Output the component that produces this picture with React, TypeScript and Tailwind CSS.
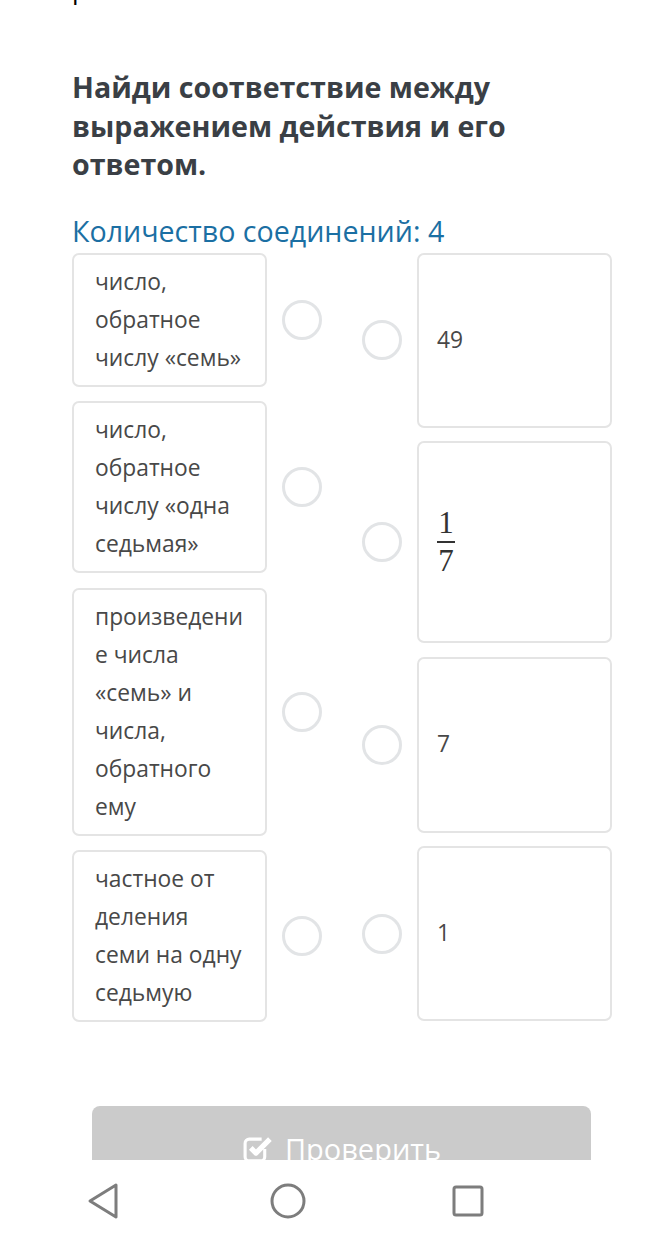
import React from "react";

const leftItems = [
  ["число,", "обратное", "числу «семь»"],
  ["число,", "обратное", "числу «одна", "седьмая»"],
  ["произведени", "е числа", "«семь» и", "числа,", "обратного", "ему"],
  ["частное от", "деления", "семи на одну", "седьмую"],
];

const rightHeights = ["h-[175px]", "h-[202px]", "h-[176px]", "h-[175px]"];

function Dot() {
  return <div className="h-[40px] w-[40px] shrink-0 rounded-full border-[3px] border-[#e2e4e6] bg-white" />;
}

function Fraction() {
  return (
    <div className="flex flex-col items-center font-['Liberation_Serif','DejaVu_Serif',serif] text-[31px] leading-[30px] text-[#333]">
      <span>1</span>
      <span className="my-[3px] h-[2px] w-[18px] bg-[#333]" />
      <span>7</span>
    </div>
  );
}

export default function App() {
  const rightContent: React.ReactNode[] = [
    <span>49</span>,
    <Fraction />,
    <span>7</span>,
    <span>1</span>,
  ];

  return (
    <div className="flex h-[1245px] w-[648px] flex-col overflow-hidden bg-white font-['Open_Sans','Noto_Sans',sans-serif]">
      <div className="mt-[-30px] pl-[72px] text-[26px] leading-[38px] text-black">р</div>

      <div className="px-[72px]">
        <h1 className="mt-[60px] text-[28.6px] font-bold leading-[38.5px] text-[#3a3f45]">
          Найди соответствие между выражением действия и его ответом.
        </h1>
        <p className="mt-[28px] text-[28.6px] leading-[38px] text-[#1b6fa3]">Количество соединений: 4</p>

        <div className="mt-[3px] flex gap-[40px]">
          <div className="flex flex-col gap-[14.5px]">
            {leftItems.map((lines, i) => (
              <div key={i} className="flex items-center gap-[15px]">
                <div className="w-[195px] rounded-[7px] border-2 border-[#e4e4e4] bg-white px-[21px] py-[8px] text-[22.8px] leading-[38px] text-[#484848]">
                  {lines.map((l, j) => (
                    <div key={j} className="whitespace-nowrap">{l}</div>
                  ))}
                </div>
                <Dot />
              </div>
            ))}
          </div>

          <div className="flex flex-col gap-[13.5px]">
            {rightContent.map((c, i) => (
              <div key={i} className="flex items-center gap-[15px]">
                <Dot />
                <div
                  className={`flex w-[195px] items-center rounded-[7px] border-2 border-[#e4e4e4] bg-white pl-[18px] text-[22.8px] text-[#484848] ${rightHeights[i]}`}
                >
                  {c}
                </div>
              </div>
            ))}
          </div>
        </div>
      </div>

      <div className="mt-[84px] h-[54px] overflow-hidden px-[92px]">
        <button className="flex h-[80px] w-[499px] items-start justify-center gap-[12px] rounded-t-[8px] bg-[#cbcbcb] pt-[23px] text-[29px] leading-[40px] text-white">
          <svg width="31" height="31" viewBox="0 0 30 30" className="mt-[5px]">
            <path d="M22 14.5V22a4 4 0 0 1-4 4H7a4 4 0 0 1-4-4V9a4 4 0 0 1 4-4h12" fill="none" stroke="white" strokeWidth="3" />
            <path d="M8.5 13.5l5 5L27 5" fill="none" stroke="white" strokeWidth="5" strokeLinejoin="round" />
          </svg>
          <span>Проверить</span>
        </button>
      </div>

      <div className="flex flex-1 items-center bg-white pb-[4px]">
        <div className="flex w-full items-center">
          <div className="flex w-[205px] justify-center">
            <svg width="34" height="38" viewBox="0 0 34 38">
              <path d="M30 3L4 19l26 16z" fill="none" stroke="#7d7d7d" strokeWidth="3" strokeLinejoin="round" />
            </svg>
          </div>
          <div className="flex w-[166px] justify-center">
            <svg width="36" height="36" viewBox="0 0 36 36">
              <circle cx="18" cy="18" r="16" fill="none" stroke="#7d7d7d" strokeWidth="3" />
            </svg>
          </div>
          <div className="flex w-[193px] justify-center">
            <svg width="32" height="32" viewBox="0 0 32 32">
              <rect x="2" y="2" width="28" height="28" rx="2" fill="none" stroke="#7d7d7d" strokeWidth="3" />
            </svg>
          </div>
        </div>
      </div>
    </div>
  );
}
